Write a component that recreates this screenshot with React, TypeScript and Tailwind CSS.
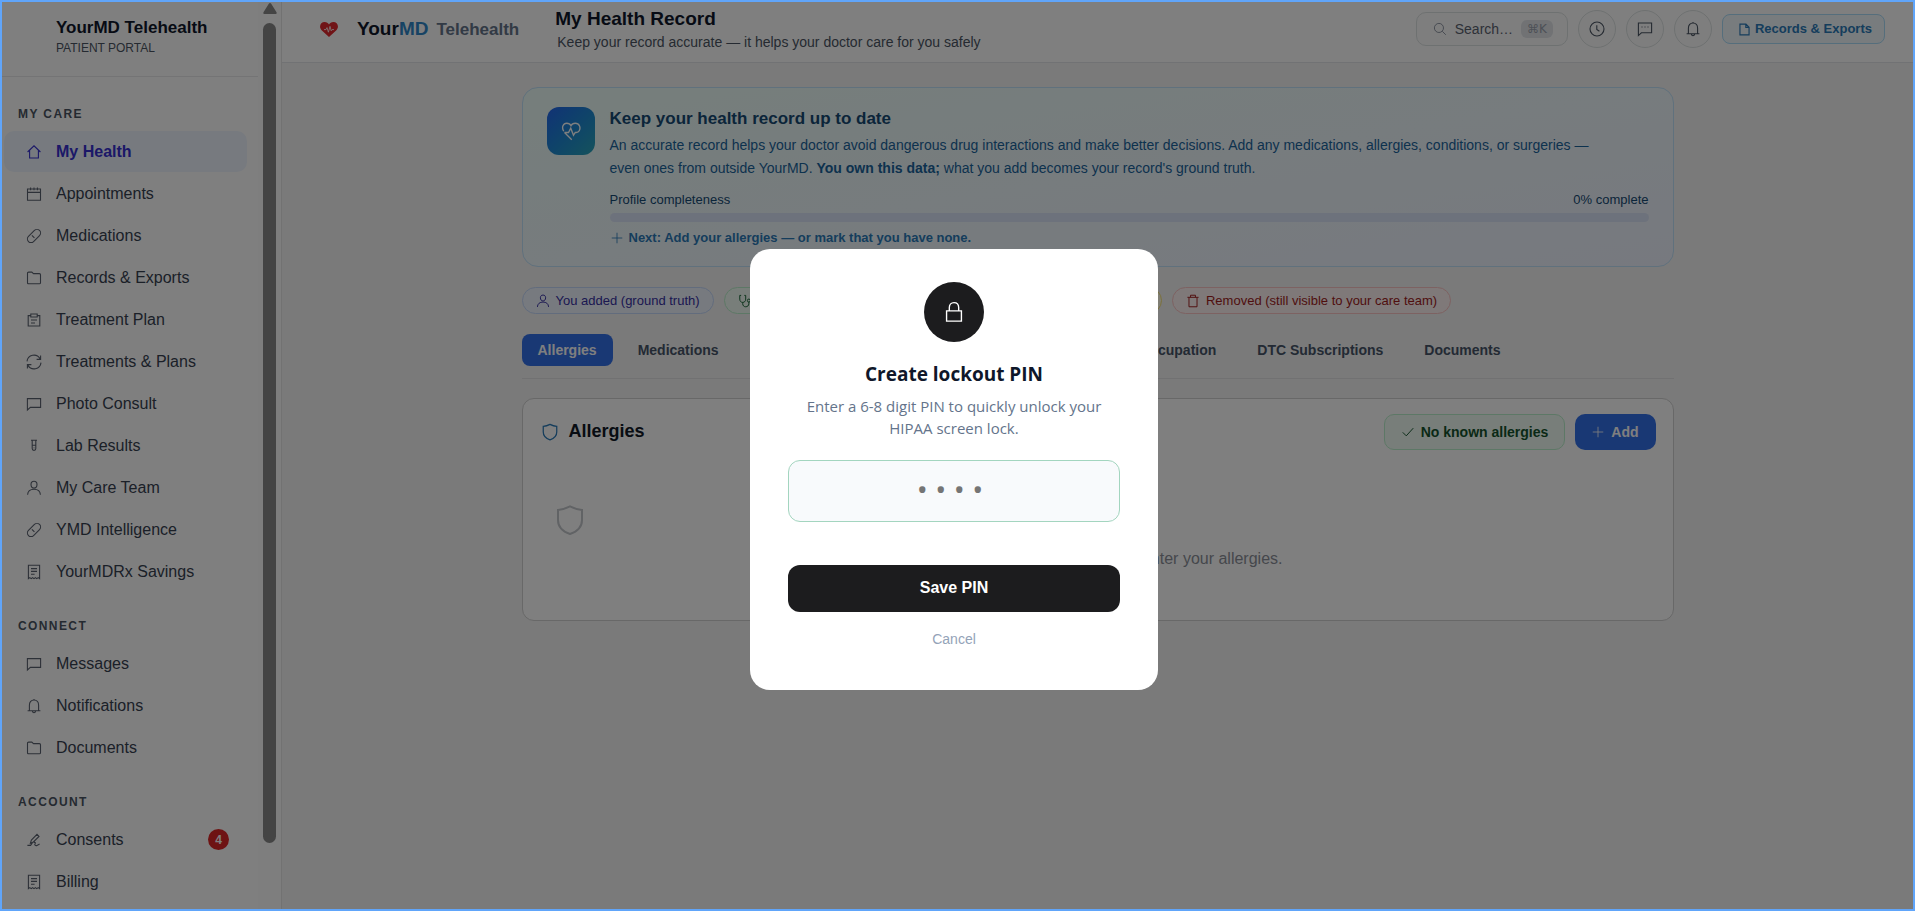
import type { ReactNode } from "react";

type IconName =
  | "home" | "calendar" | "pill" | "folder" | "clipboard" | "sync" | "chat" | "chatDots" | "tube" | "user"
  | "receipt" | "bell" | "pen" | "file" | "search" | "clock" | "heart" | "plus" | "check" | "shield"
  | "stethoscope" | "trash" | "store" | "lock";

const shapes: Record<IconName, ReactNode> = {
  home: <path d="M1.6 8 8 1.8 14.4 8M3.6 6.4V14h8.8V6.4" />,
  calendar: <path d="M1.5 3h13v11.3h-13zM1.5 6.4h13M4.6 1.6v2.6M8 1.6v2.6M11.4 1.6v2.6" />,
  pill: (
    <g transform="rotate(-45 8 8)">
      <rect x="0.2" y="4.4" width="15.6" height="7.2" rx="3.6" />
      <path d="M7 6v3.6" />
    </g>
  ),
  folder: <path d="M1.5 3.2c0-.7.4-1.1 1.1-1.1h3.2l1.7 1.5h5.9c.7 0 1.1.4 1.1 1.1v8c0 .7-.4 1.1-1.1 1.1H2.6c-.7 0-1.1-.4-1.1-1.1z" />,
  clipboard: <path d="M4.8 3.6H2.2V14h11.6V3.6h-2.6M4.8 2h6.4v3H4.8zM5 8h6M5 11h4" />,
  sync: <path d="M1 7.4A7 7 0 0 1 14 4.6M15 8.6A7 7 0 0 1 2 11.4M14.6 1.4v4h-4M1.4 14.6v-4h4" />,
  chat: <path d="M1.4 2.6h13.2v8.8H4.4L1.4 14z" />,
  chatDots: <path d="M1.4 2h13.2v9.8H4.4L1.4 14.6zM4.5 6h1M7.5 6h1M10.5 6h1" />,
  tube: <path d="M5 2.2h6M6.2 2.2v8.4a1.8 1.8 0 0 0 3.6 0V2.2M6.2 7.2h3.6M8 9.4v.8" />,
  user: <path d="M8 1.2c2 0 3 1.3 3 3.2S9.8 8 8 8 5 6.3 5 4.4 6 1.2 8 1.2zM1.6 14.8C1.8 11 4.4 9.2 8 9.2s6.2 1.8 6.4 5.6" />,
  receipt: <path d="M2.4 1.2h11.2v13.4l-1.4-1-1.4 1-1.4-1-1.4 1-1.4-1-1.4 1-1.4-1-1.4 1zM5 4.6h6M5 7.4h6M5 10.2h3.6" />,
  bell: <path d="M3.4 12.8V7.2C3.4 4.2 5.2 2 8 2s4.6 2.2 4.6 5.2v5.6M1.6 12.8h12.8M6.4 13.2c.2 1.2.8 1.6 1.6 1.6s1.4-.4 1.6-1.6M8 1v1" />,
  pen: <path d="m4.4 11.2 1-3.2L11 2.4l2 2-5.600 5.600zM1.400 13.400h3.200l1.800-2.600M7.800 10.600c1.600-.6 2 .2 1.200 1.200s.4 2.200 2 1.600l2.600-1.400" />,
  file: <path d="M2.4 1.4h7.4l3.8 3.8v9.4H2.4zM9.6 1.6v3.8h3.8" />,
  search: <path d="M6.8 1.6a5.2 5.2 0 1 0 0 10.4 5.2 5.2 0 0 0 0-10.4zM10.6 10.6l4 4" />,
  clock: <path d="M8 1a7 7 0 1 0 0 14A7 7 0 0 0 8 1zM7.8 4.2v4.2l2.6 1.8" />,
  heart: <path d="M2.2 8.2C.2 5 1.8 1.8 4.6 1.8c1.6 0 2.8.8 3.4 2 .6-1.2 1.8-2 3.4-2 3.2 0 4.6 3.2 3.2 6-.6 1.2-1.4 1.4-2.4 1.4h-.8L10 11.4 7.8 5.8 6 9.2H2.8M2.8 9.2 8.6 15" />,
  plus: <path d="M8 1v14M1 8h14" />,
  check: <path d="m2 8.4 4 4L14 3.6" />,
  shield: <path d="M8 1.2c2 1 4 1.600 6 1.800v5c0 3.400-2.400 5.800-6 7-3.600-1.200-6-3.600-6-7V3c2-.2 4-.8 6-1.800z" />,
  stethoscope: <path d="M3.6 1.6H2v4.2c0 2.4 1.4 3.8 3.4 3.8s3.4-1.4 3.4-3.8V1.6H7.2M5.4 9.6v1.6c0 2 1.4 3.4 3.4 3.4s3.6-1.4 3.6-3.4V9.2M12.4 5.8a1.7 1.7 0 1 0 0 3.4 1.7 1.7 0 0 0 0-3.4z" />,
  trash: <path d="M1.6 3.8h12.8M5.2 3.6V1.4h5.6v2.2M3.4 4v10.6h9.2V4" />,
  store: <path d="M2 6.4v8h12v-8M1.2 6.4 3 1.6h10l1.8 4.8z" />,
  lock: <path d="M2.6 7.2h10.8v7.4H2.6zM4.6 7V4.8C4.6 2.6 6 1.2 8 1.2s3.4 1.4 3.4 3.6V7" />,
};

function Icon({ name, className = "size-4", width = 1.1 }: { name: IconName; className?: string; width?: number }) {
  return (
    <svg viewBox="0 0 16 16" fill="none" stroke="currentColor" strokeWidth={width} aria-hidden="true" className={`shrink-0 ${className}`}>
      {shapes[name]}
    </svg>
  );
}

interface NavItem {
  label: string;
  icon: IconName;
  active?: boolean;
  badge?: number;
}

const sections: { title: string; items: NavItem[] }[] = [
  {
    title: "MY CARE",
    items: [
      { label: "My Health", icon: "home", active: true },
      { label: "Appointments", icon: "calendar" },
      { label: "Medications", icon: "pill" },
      { label: "Records & Exports", icon: "folder" },
      { label: "Treatment Plan", icon: "clipboard" },
      { label: "Treatments & Plans", icon: "sync" },
      { label: "Photo Consult", icon: "chat" },
      { label: "Lab Results", icon: "tube" },
      { label: "My Care Team", icon: "user" },
      { label: "YMD Intelligence", icon: "pill" },
      { label: "YourMDRx Savings", icon: "receipt" },
    ],
  },
  {
    title: "CONNECT",
    items: [
      { label: "Messages", icon: "chat" },
      { label: "Notifications", icon: "bell" },
      { label: "Documents", icon: "folder" },
    ],
  },
  {
    title: "ACCOUNT",
    items: [
      { label: "Consents", icon: "pen", badge: 4 },
      { label: "Billing", icon: "receipt" },
    ],
  },
];

function Sidebar() {
  return (
    <aside className="flex w-[282px] shrink-0 border-r border-[#e5e5e5] bg-white">
      <div className="min-w-0 flex-1 overflow-hidden">
        <div className="h-[77px] border-b border-[#e8e8ea] pt-[18px] pl-14">
          <div className="text-[17px] leading-5 font-bold text-[#0f172a]">YourMD Telehealth</div>
          <div className="text-xs leading-5 text-[#4b5563]">PATIENT PORTAL</div>
        </div>
        <nav className="flex flex-col gap-6 pt-[27px] pr-[11px] pl-1">
          {sections.map((section) => (
            <div key={section.title}>
              <h2 className="mb-[7px] pl-[14px] text-xs leading-5 font-bold tracking-[1.4px] text-[#4b5563]">{section.title}</h2>
              <ul className="flex flex-col gap-px">
                {section.items.map((item) => (
                  <li key={item.label}>
                    <a
                      href="#"
                      className={
                        item.active
                          ? "flex h-[41px] items-center gap-[14px] rounded-[10px] bg-[#eef5ff] pr-[18px] pl-[22px] text-base font-bold text-[#3730d0]"
                          : "flex h-[41px] items-center gap-[14px] rounded-[10px] pr-[18px] pl-[22px] text-base text-[#374151]"
                      }
                    >
                      <Icon name={item.icon} className={item.active ? "size-4" : "size-4 text-[#5b6270]"} />
                      <span className="flex-1">{item.label}</span>
                      {item.badge !== undefined && (
                        <span className="flex size-[21px] items-center justify-center rounded-full bg-[#dc2626] text-xs font-bold text-white">
                          {item.badge}
                        </span>
                      )}
                    </a>
                  </li>
                ))}
              </ul>
            </div>
          ))}
        </nav>
      </div>
      <div className="flex w-[23px] flex-col items-center bg-[#fcfcfc] pt-[3px]" aria-hidden="true">
        <svg viewBox="0 0 14 11" className="h-[11px] w-[14px] fill-[#888]">
          <path d="M7 0c.5 0 .9.2 1.2.7l5.3 8.6c.5.9.2 1.7-.8 1.7H1.3c-1 0-1.3-.8-.8-1.7L5.8.7C6.1.2 6.5 0 7 0z" />
        </svg>
        <div className="mt-[9px] h-[820px] w-[13px] rounded-full bg-[#888]" />
      </div>
    </aside>
  );
}

function BrandHeart() {
  return (
    <svg viewBox="0 0 18 15" className="h-[15px] w-[18px] shrink-0" aria-hidden="true">
      <path d="M9 15 1.6 8.2C-1.6 4.6.6 0 4.6 0 6.6 0 8.2 1 9 2.6 9.8 1 11.4 0 13.4 0c4 0 6.2 4.6 3 8.2z" fill="#e0282e" />
      <path d="M4 7.6h2l1-2 1.4 4.6L10 4.4l1.2 4.4.8-1.2h2" fill="none" stroke="#fff" strokeWidth="0.8" />
    </svg>
  );
}

function IconButton({ name, label }: { name: IconName; label: string }) {
  return (
    <button type="button" aria-label={label} className="flex size-[38px] items-center justify-center rounded-full border border-[#dde2e2] bg-[#fcfdfd] text-[#4b5563]">
      <Icon name={name} />
    </button>
  );
}

function Header() {
  return (
    <header className="flex h-[63px] shrink-0 items-center border-b border-[#e2e4e8] bg-white pr-7 pb-1 pl-[38px]">
      <BrandHeart />
      <div className="ml-[19px] flex items-baseline gap-2 leading-6 font-bold">
        <span className="text-[19px] text-[#0f172a]">
          Your<span className="text-[#2e86c8]">MD</span>
        </span>
        <span className="text-[17px] text-[#64748b]">Telehealth</span>
      </div>
      <div className="ml-9 flex-1 pt-0.5">
        <h1 className="text-[19px] leading-6 font-bold text-[#0f172a]">My Health Record</h1>
        <p className="pl-0.5 text-sm leading-[22px] text-[#4b5563]">Keep your record accurate — it helps your doctor care for you safely</p>
      </div>
      <div className="flex items-center gap-[10px]">
        <button type="button" className="flex h-[34px] items-center rounded-[10px] border border-[#dde2e2] bg-[#fcfdfd] pr-[14px] pl-4 text-sm text-[#5b6270]">
          <Icon name="search" className="size-[14px] text-[#8b92a0]" />
          <span className="ml-2">Search…</span>
          <kbd className="ml-2 flex h-[18px] items-center rounded-md bg-[#e2e5e9] px-[6px] font-['DejaVu_Sans',sans-serif] text-xs font-normal text-[#9aa1ad]">⌘K</kbd>
        </button>
        <IconButton name="clock" label="History" />
        <IconButton name="chatDots" label="Messages" />
        <IconButton name="bell" label="Notifications" />
        <button type="button" className="flex h-[30px] items-center gap-1 rounded-lg border border-[#aadcf8] bg-[#f0f8fd] pr-3 pl-[15px] text-[13px] font-bold text-[#2a7ab8]">
          <Icon name="file" className="size-[13px]" width={1.4} />
          Records &amp; Exports
        </button>
      </div>
    </header>
  );
}

function Banner() {
  return (
    <section className="flex h-[180px] gap-[15px] rounded-2xl border border-[#c0e2fa] bg-linear-to-br from-[#ecfdf8] via-[#eef8fc] to-[#eff3ff] px-6 pt-[19px]">
      <div className="flex size-12 shrink-0 items-center justify-center rounded-xl bg-linear-to-br from-[#2563eb] to-[#2ca5b8] text-white">
        <Icon name="heart" className="size-[20px]" />
      </div>
      <div className="min-w-0 flex-1">
        <h2 className="text-[17px] leading-6 font-bold text-[#164a74]">Keep your health record up to date</h2>
        <p className="mt-[3px] pr-10 text-sm leading-[23px] text-[#1a649c]">
          An accurate record helps your doctor avoid dangerous drug interactions and make better decisions. Add any medications, allergies,
          conditions, or surgeries — even ones from outside YourMD. <strong>You own this data;</strong> what you add becomes your record's ground truth.
        </p>
        <div className="mt-[10px] flex justify-between text-[13px] leading-5 text-[#164a74]">
          <span id="completeness">Profile completeness</span>
          <span>0% complete</span>
        </div>
        <div role="progressbar" aria-labelledby="completeness" aria-valuenow={0} className="mt-[3px] h-[9px] rounded-full bg-[#dbe5f8]" />
        <p className="mt-[6px] flex items-center gap-[6px] pl-[1px] text-[13px] leading-5 font-bold text-[#2a7ab8]">
          <Icon name="plus" className="size-3" />
          Next: Add your allergies — or mark that you have none.
        </p>
      </div>
    </section>
  );
}

const chips: { label: string; icon: IconName; tone: string }[] = [
  { label: "You added (ground truth)", icon: "user", tone: "border-[#c4d8fa] bg-[#eff5ff] text-[#3730a3]" },
  { label: "Added by your YourMD provider", icon: "stethoscope", tone: "border-[#bbf0cc] bg-[#f0fdf4] text-[#166534]" },
  { label: "Imported from pharmacist", icon: "store", tone: "border-[#f5e27a] bg-[#fefce8] text-[#854d0e]" },
  { label: "Removed (still visible to your care team)", icon: "trash", tone: "border-[#fbc4c4] bg-[#fef2f2] text-[#a01c1c]" },
];

const tabs = ["Allergies", "Medications", "Conditions", "Surgeries", "Family", "Lifestyle & Occupation", "DTC Subscriptions", "Documents"];

function RecordPanel() {
  return (
    <section className="mt-[19px] h-[223px] rounded-xl border border-[#d0d0d0] bg-white px-[17px] pt-[15px]">
      <div className="flex items-center gap-[10px]">
        <Icon name="shield" className="ml-px size-[18px] text-[#2a7ab8]" />
        <h2 className="flex-1 pb-0.5 text-lg font-bold text-[#111827]">Allergies</h2>
        <button type="button" className="flex h-9 items-center gap-[6px] rounded-[10px] border border-[#bbf0cc] bg-[#f0fdf4] px-4 text-sm font-bold text-[#14532d]">
          <Icon name="check" className="size-[14px]" />
          No known allergies
        </button>
        <button type="button" className="flex h-9 items-center gap-[7px] rounded-[10px] bg-[#3370e8] px-[17px] text-sm font-bold text-white">
          <Icon name="plus" className="size-3" />
          Add
        </button>
      </div>
      <Icon name="shield" className="mt-[54px] ml-[14px] size-[32px] text-[#c3c6cb]" width={1} />
      <p className="mt-[11px] text-center text-base leading-6 text-[#8b8f98]">No allergies on file. Click Add to enter your allergies.</p>
    </section>
  );
}

function PinDialog() {
  return (
    <div className="fixed inset-0 flex items-center justify-center bg-black/50 pt-[28px] pr-[7px]">
      <form role="dialog" aria-modal="true" aria-labelledby="pin-title" className="flex w-[408px] flex-col items-center rounded-[20px] bg-white px-[38px] pt-[33px] pb-[39px]">
        <div className="flex size-[60px] items-center justify-center rounded-full bg-[#1c1c1e] text-white">
          <Icon name="lock" className="size-[22px]" width={1} />
        </div>
        <h2 id="pin-title" className="mt-[18px] font-['Open_Sans','Noto_Sans',sans-serif] text-[19px] leading-7 font-bold text-[#0f172a]">
          Create lockout PIN
        </h2>
        <p className="mt-[7px] px-3 text-center font-['Open_Sans','Noto_Sans',sans-serif] text-[15px] leading-[22px] text-[#64748b]">
          Enter a 6-8 digit PIN to quickly unlock your HIPAA screen lock.
        </p>
        <input
          type="password"
          aria-label="PIN"
          placeholder="••••"
          className="mt-[21px] h-[62px] w-full rounded-xl border border-[#a3d5bf] bg-[#f8fafc] pb-1 text-center font-['Noto_Sans',sans-serif] text-[28px] tracking-[8px] placeholder:text-[#757575]"
        />
        <button type="submit" className="mt-[43px] h-[47px] w-full rounded-xl bg-[#1c1c1e] pb-0.5 text-base font-bold text-white">
          Save PIN
        </button>
        <button type="button" className="mt-[15px] px-4 text-sm leading-6 text-[#94a3b8]">
          Cancel
        </button>
      </form>
    </div>
  );
}

export default function App() {
  return (
    <div className="flex h-screen overflow-hidden bg-[#f4f4f4] pr-0.5 font-['Liberation_Sans',Arial,sans-serif]">
      <Sidebar />
      <div className="flex min-w-0 flex-1 flex-col">
        <Header />
        <main className="flex-1 px-8 pt-6">
          <div className="mx-auto max-w-[1152px]">
            <Banner />
            <div className="mt-5 flex gap-[10px]">
              {chips.map((chip) => (
                <span key={chip.label} className={`flex h-[27px] items-center gap-[6px] rounded-full border px-[13px] text-[13px] whitespace-nowrap ${chip.tone}`}>
                  <Icon name={chip.icon} className="size-[14px]" />
                  {chip.label}
                </span>
              ))}
            </div>
            <div role="tablist" className="mt-5 flex gap-[9px] border-b border-[#e2e2e4] pb-3">
              {tabs.map((tab, i) => (
                <button
                  key={tab}
                  type="button"
                  role="tab"
                  aria-selected={i === 0}
                  className={
                    i === 0
                      ? "h-8 rounded-lg bg-[#3370e8] px-4 text-sm font-bold whitespace-nowrap text-white"
                      : "h-8 rounded-lg px-4 text-sm font-bold whitespace-nowrap text-[#475569]"
                  }
                >
                  {tab}
                </button>
              ))}
            </div>
            <RecordPanel />
          </div>
        </main>
      </div>
      <PinDialog />
      <div className="pointer-events-none fixed inset-0 border-2 border-[#60a5fa]" aria-hidden="true" />
    </div>
  );
}
